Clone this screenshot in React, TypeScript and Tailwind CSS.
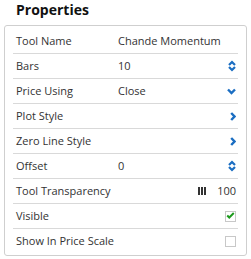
import React from "react";

const font = { fontFamily: '"Open Sans", "Liberation Sans", sans-serif' };

function Spinner() {
  return (
    <svg width="8" height="12" viewBox="0 0 8 12" className="text-[#1b6ec2]">
      <path d="M1 5 L4 2 L7 5" fill="none" stroke="currentColor" strokeWidth="2.2" />
      <path d="M1 7 L4 10 L7 7" fill="none" stroke="currentColor" strokeWidth="2.2" />
    </svg>
  );
}

function ChevronDown() {
  return (
    <svg width="9" height="7" viewBox="0 0 9 7" className="text-[#1b6ec2]">
      <path d="M1 1.5 L4.5 5 L8 1.5" fill="none" stroke="currentColor" strokeWidth="2.4" />
    </svg>
  );
}

function ChevronRight() {
  return (
    <svg width="6" height="9" viewBox="0 0 6 9" className="text-[#1b6ec2]">
      <path d="M1.2 1 L4.5 4.5 L1.2 8" fill="none" stroke="currentColor" strokeWidth="2.4" />
    </svg>
  );
}

function Checkbox({ checked }: { checked?: boolean }) {
  return (
    <div className="flex h-[11px] w-[11px] items-center justify-center border border-[#c8c8c8] bg-white">
      {checked && (
        <svg width="11" height="9" viewBox="0 0 11 9" className="-mt-[1px]">
          <path d="M1.5 4.5 L4 7 L9.5 1.5" fill="none" stroke="#1c9a1c" strokeWidth="2.4" />
        </svg>
      )}
    </div>
  );
}

function Row({
  label,
  value,
  right,
  last,
}: {
  label: string;
  value?: string;
  right?: React.ReactNode;
  last?: boolean;
}) {
  return (
    <div
      className={`flex h-[25px] items-center whitespace-nowrap pl-[3px] pr-[2px] text-[11px] text-[#333] ${
        last ? "" : "border-b border-[#d9d9d9]"
      }`}
    >
      <span className="w-[102px] shrink-0">{label}</span>
      <span className="flex-1">{value}</span>
      {right}
    </div>
  );
}

export default function App() {
  return (
    <div className="h-[259px] w-[251px] bg-white" style={font}>
      <h1 className="pl-4 text-[14px] font-bold leading-[19px] text-[#111]">
        Properties
      </h1>
      <div className="mx-1 mt-[6px] rounded-[3px] border border-[#cfcfcf] px-2 pt-[3px] pb-[1px]">
        <Row label="Tool Name" value="Chande Momentum" />
        <Row label="Bars" value="10" right={<Spinner />} />
        <Row label="Price Using" value="Close" right={<ChevronDown />} />
        <Row label="Plot Style" right={<ChevronRight />} />
        <Row label="Zero Line Style" right={<ChevronRight />} />
        <Row label="Offset" value="0" right={<Spinner />} />
        <Row
          label="Tool Transparency"
          right={
            <div className="flex items-center gap-[11px]">
              <div className="flex gap-[1px]">
                <div className="h-[8px] w-[2px] bg-[#333]" />
                <div className="h-[8px] w-[2px] bg-[#333]" />
                <div className="h-[8px] w-[2px] bg-[#333]" />
              </div>
              <span>100</span>
            </div>
          }
        />
        <Row label="Visible" right={<Checkbox checked />} />
        <Row label="Show In Price Scale" right={<Checkbox />} last />
      </div>
    </div>
  );
}
